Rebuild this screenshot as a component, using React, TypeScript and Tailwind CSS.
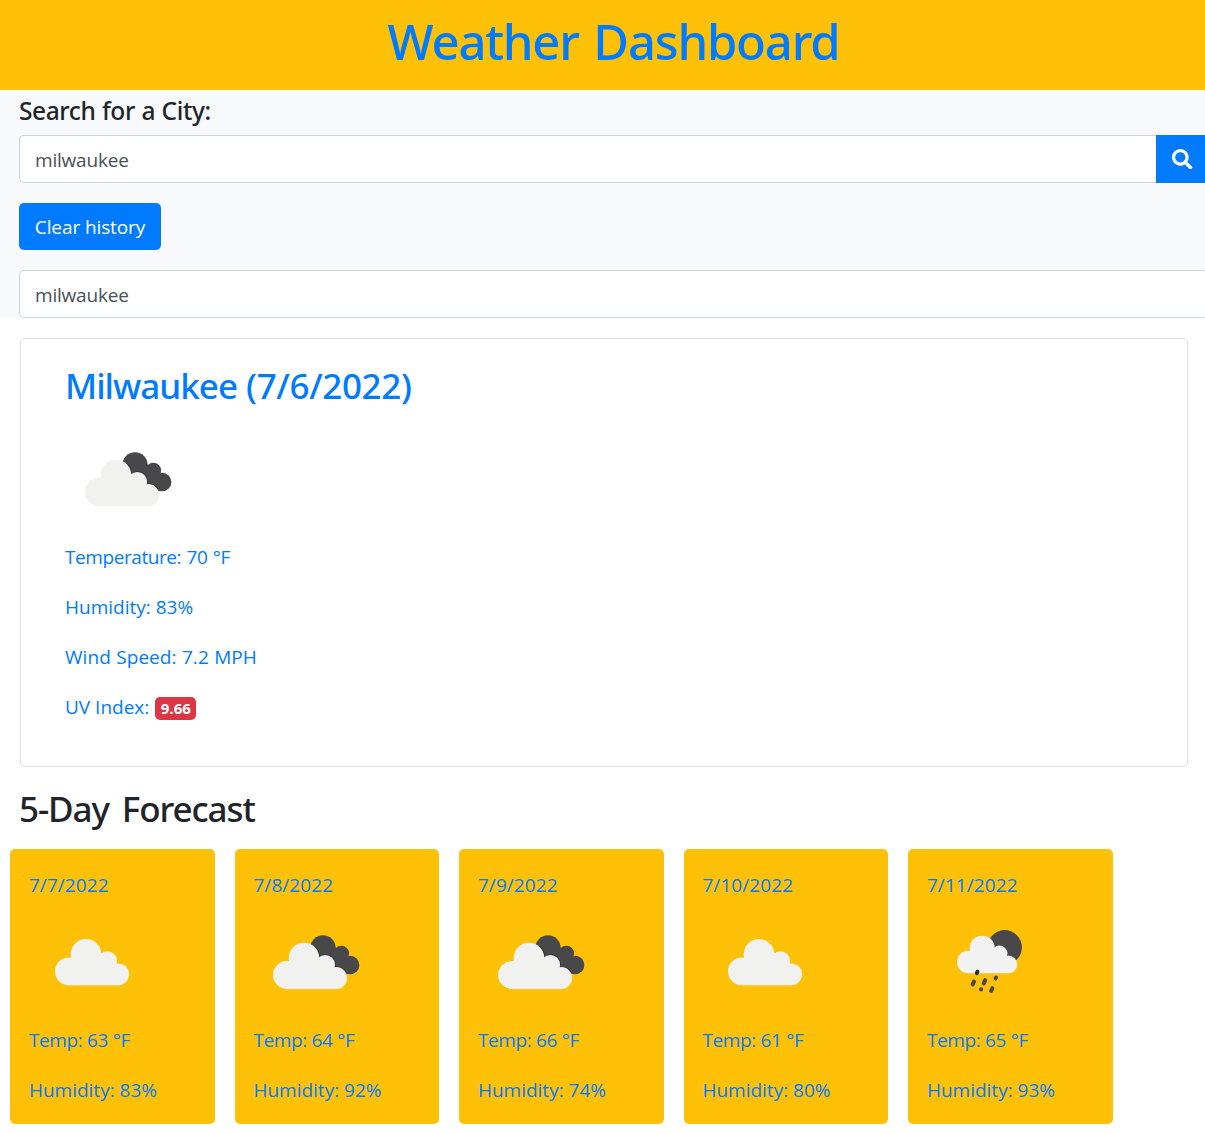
import React from "react";
import { FaSearch } from "react-icons/fa";

type Sky = "cloudy" | "overcast" | "rain";

function Cloud({ fill = "#f1f1ef" }: { fill?: string }) {
  return (
    <g fill={fill}>
      <circle cx="31" cy="15.3" r="15.3" />
      <circle cx="13.9" cy="32.3" r="13.9" />
      <circle cx="52.3" cy="22" r="9.8" />
      <circle cx="63.2" cy="35.3" r="10.9" />
      <path d="M13.9 46.2H63.2V26H55L46 18H18L14 24Z" />
    </g>
  );
}

function WeatherIcon({ sky }: { sky: Sky }) {
  return (
    <svg width="125" height="85" viewBox="0 0 125 85" className="block" aria-hidden="true">
      {sky === "cloudy" && (
        <g transform="translate(26 20)">
          <Cloud />
        </g>
      )}
      {sky === "overcast" && (
        <g transform="translate(20 23.7)">
          <clipPath id="cloud-shadow">
            <path d="M39.5 3H80V30H72L60 26H39.5Z" />
          </clipPath>
          <g fill="#48484a">
            <circle cx="50" cy="5.3" r="12.7" />
            <circle cx="68.3" cy="10.8" r="7.8" />
            <circle cx="77.2" cy="22.3" r="9.2" />
            <path d="M50 5H63L69 14L76 20V31H50Z" />
          </g>
          <g clipPath="url(#cloud-shadow)">
            <g transform="translate(0.7 -0.7)">
              <Cloud fill="#2f2f31" />
            </g>
          </g>
          <Cloud />
        </g>
      )}
      {sky === "rain" && (
        <g>
          <circle cx="77.7" cy="28.3" r="17.2" fill="#48484a" />
          <g transform="translate(30 16.7) scale(0.813)">
            <Cloud fill="#f2f2f2" />
          </g>
          <g stroke="#48484a" strokeWidth="4" strokeLinecap="round">
            <path d="M50.4 52.7L49.8 54.2" stroke="#2f2f31" />
            <path d="M47 62.6L45.7 65.4" />
            <path d="M58.2 61.2L56.7 64.4" />
            <path d="M69 58.6L68.6 59.4" />
            <path d="M54.1 70.3L54 70.5" />
            <path d="M65.4 69.2L64.1 72" />
          </g>
        </g>
      )}
    </svg>
  );
}

const forecast: { date: string; sky: Sky; temp: number; humidity: number }[] = [
  { date: "7/7/2022", sky: "cloudy", temp: 63, humidity: 83 },
  { date: "7/8/2022", sky: "overcast", temp: 64, humidity: 92 },
  { date: "7/9/2022", sky: "overcast", temp: 66, humidity: 74 },
  { date: "7/10/2022", sky: "cloudy", temp: 61, humidity: 80 },
  { date: "7/11/2022", sky: "rain", temp: 65, humidity: 93 },
];

export default function App() {
  return (
    <div className="h-[1134px] w-full overflow-hidden bg-white font-['Open_Sans',sans-serif] text-[19px] leading-[30px] text-[#212529]">
      <header className="flex h-[90px] items-center justify-center bg-[#ffc107] pb-2 pl-[22px]">
        <h1 className="font-['Noto_Sans',sans-serif] text-[49px] leading-[60px] font-medium tracking-[-1.2px] text-[#007bff] [word-spacing:3px]">
          Weather Dashboard
        </h1>
      </header>

      <section className="h-[228px] bg-[#f8f9fa] pt-1.5 pl-[19px]">
        <h2 className="mb-[9px] font-['Noto_Sans',sans-serif] text-[24.5px] leading-[30px] font-medium tracking-[-0.4px] [word-spacing:0.6px]">
          Search for a City:
        </h2>
        <div className="flex h-12">
          <input
            aria-label="City"
            defaultValue="milwaukee"
            className="min-w-0 flex-1 rounded-l-[5px] border border-r-0 border-[#ced4da] bg-white px-[15px] pt-0.5 tracking-[-0.2px] text-[#495057] outline-none"
          />
          <button aria-label="Search" className="flex w-[49px] items-center justify-center bg-[#007bff] pl-[3.5px] text-white">
            <FaSearch size={20.5} />
          </button>
        </div>
        <button className="mt-5 flex h-[47px] w-[142px] items-center justify-center rounded-[5px] bg-[#007bff] tracking-[-0.1px] text-white">
          Clear history
        </button>
        <input
          aria-label="Previous search"
          readOnly
          value="milwaukee"
          className="mt-5 block h-12 w-full rounded-l-[5px] rounded-r-xs border border-r-0 border-[#ced4da] bg-white px-[15px] pt-0.5 tracking-[-0.2px] text-[#495057] outline-none"
        />
      </section>

      <section className="mt-5 mr-[17px] ml-5 h-[429px] rounded-[5px] border border-black/[0.125] pt-[26px] pl-11 text-[#007bff]">
        <h2 className="mb-[29px] font-['Noto_Sans',sans-serif] text-[35px] leading-[42px] font-medium text-[#007bff]">
          <span className="tracking-[-1px]">Milwaukee</span> <span className="tracking-[-0.35px]">(7/6/2022)</span>
        </h2>
        <WeatherIcon sky="overcast" />
        <div className="mt-[21px] flex flex-col gap-5">
          <p className="tracking-[-0.42px] [word-spacing:0.8px]">Temperature: 70 °F</p>
          <p>Humidity: 83%</p>
          <p className="tracking-[0.07px] [word-spacing:0.3px]">Wind Speed: 7.2 MPH</p>
          <p className="flex items-center">
            UV Index:
            <span className="mt-[3px] ml-1.5 flex h-[23px] w-[41px] items-center justify-center rounded-[5px] bg-[#dc3545] text-[15px] leading-none font-bold text-white">
              9.66
            </span>
          </p>
        </div>
      </section>

      <h2 className="mt-[21px] ml-[19px] font-['Noto_Sans',sans-serif] text-[35px] leading-[42px] font-medium tracking-[-1.1px] [word-spacing:5px]">
        5-Day Forecast
      </h2>
      <div className="mt-[19px] ml-2.5 flex gap-5">
        {forecast.map((day) => (
          <article key={day.date} className="flex h-[275px] w-[204.5px] flex-col rounded-[5px] bg-[#ffc107] pt-[21px] pl-[18.9px] text-[#007bff]">
            <p className="mb-[19px] tracking-[0.08px]">{day.date}</p>
            <WeatherIcon sky={day.sky} />
            <p className="mt-[21px] mb-5 tracking-[-0.35px]">Temp: {day.temp} °F</p>
            <p>Humidity: {day.humidity}%</p>
          </article>
        ))}
      </div>
    </div>
  );
}
